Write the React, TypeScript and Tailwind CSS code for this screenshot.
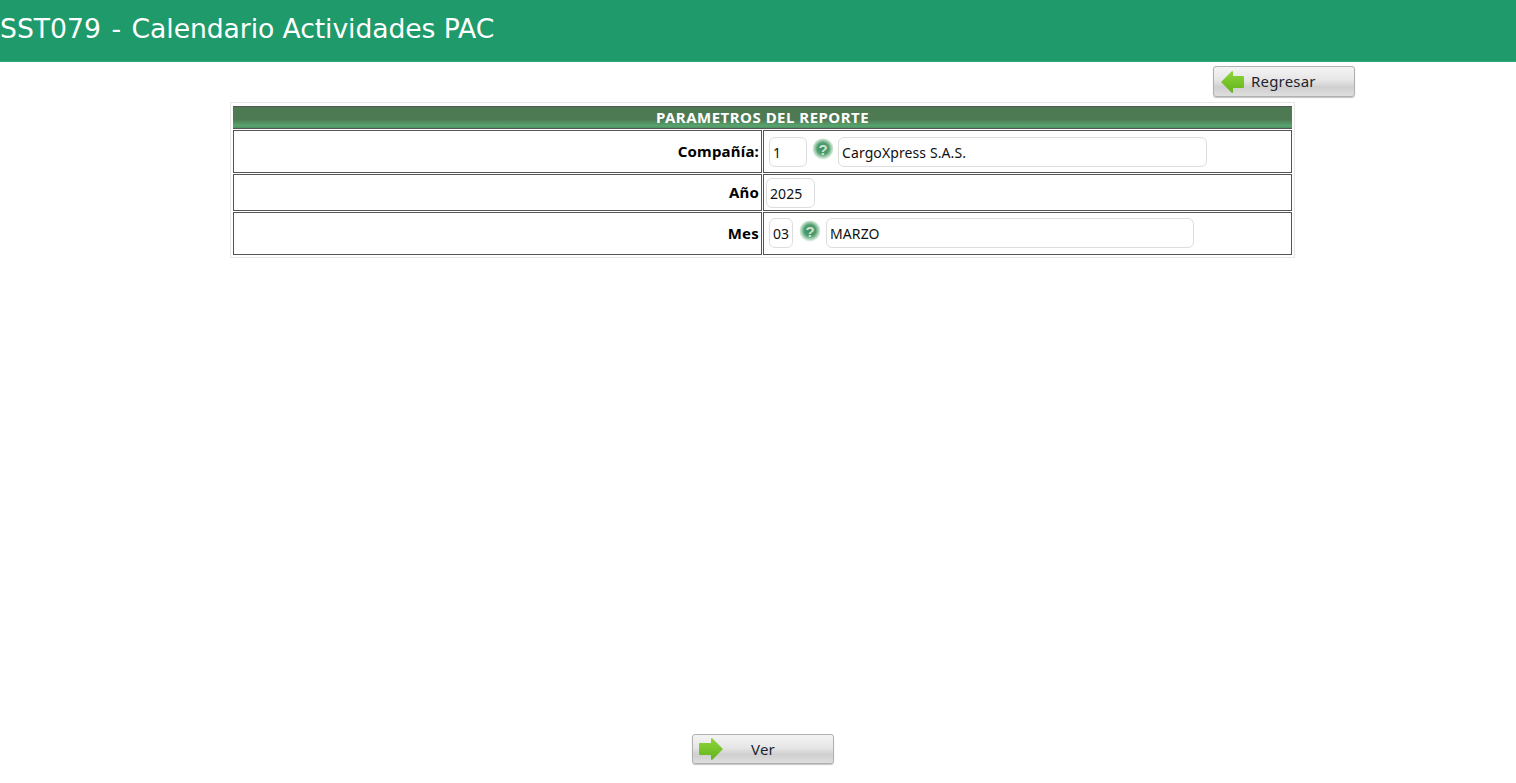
import type { ReactNode } from 'react';

const uiFont = 'font-["Noto_Sans",sans-serif]';

function Arrow({ left }: { left?: boolean }) {
  return (
    <svg width="26" height="24" viewBox="0 0 26 24" className="shrink-0">
      <defs>
        <linearGradient id={left ? 'ga' : 'gb'} x1="0" y1="0" x2="0" y2="1">
          <stop offset="0" stopColor="#8ed63a" />
          <stop offset="1" stopColor="#62b31c" />
        </linearGradient>
      </defs>
      <path
        d={left ? 'M1 12 L12 1 L13 1.5 L13 6 L23 6 Q24 6 24 7 L24 17 Q24 18 23 18 L13 18 L13 22.5 L12 23 Z' : 'M24 12 L13 1 L12 1.5 L12 6 L1 6 Q0 6 0 7 L0 17 Q0 18 1 18 L12 18 L12 22.5 L13 23 Z'}
        fill={`url(#${left ? 'ga' : 'gb'})`}
      />
    </svg>
  );
}

function HelpIcon() {
  return (
    <svg width="22" height="22" viewBox="0 0 22 22" className="shrink-0">
      <defs>
        <radialGradient id="help" cx="0.5" cy="0.48" r="0.5">
          <stop offset="0" stopColor="#3c8f5c" />
          <stop offset="0.55" stopColor="#4f9d6e" />
          <stop offset="0.8" stopColor="#a5d0b3" />
          <stop offset="1" stopColor="#e3f1e7" />
        </radialGradient>
      </defs>
      <circle cx="11" cy="11" r="10.5" fill="url(#help)" />
      <text x="11" y="16.5" textAnchor="middle" fontSize="15" fontWeight="700" fill="#cfe3d5" fontFamily="Liberation Sans, sans-serif">?</text>
    </svg>
  );
}

function Button({ children, className, icon }: { children: ReactNode; className: string; icon: ReactNode }) {
  return (
    <div className={`flex w-[142px] items-center rounded-[3px] border border-[#b0b0b0] bg-[linear-gradient(#f4f4f4_0%,#e6e6e6_45%,#cfcfcf_70%,#dedede_100%)] pl-[6px] text-[15px] tracking-[0.2px] text-[#1c2430] shadow-[0_1px_1px_#c4c4c4] ${uiFont} ${className}`}>
      {icon}
      {children}
    </div>
  );
}

function Field({ value, width }: { value: string; width: string }) {
  return (
    <div className={`flex h-[30px] items-center rounded-[6px] border border-[#dddddd] bg-white pt-0.5 pl-[3px] text-[14px] tracking-[0.1px] text-[#111] ${width}`}>
      {value}
    </div>
  );
}

function Row({ label, height, children }: { label: string; height: string; children: ReactNode }) {
  return (
    <div className={`flex gap-px ${height}`}>
      <div className="flex w-[529px] items-center justify-end border border-[#555555] pr-0.5 text-[15px] font-bold tracking-[0.2px] text-black">
        {label}
      </div>
      <div className="flex w-[529px] items-center border border-[#555555]">{children}</div>
    </div>
  );
}

export default function App() {
  return (
    <div className={`relative h-[783px] overflow-hidden bg-white ${uiFont}`}>
      <header className='flex h-[62px] items-center border-b border-[#2fa877] bg-[#1e9a6b] pb-1 font-["DejaVu_Sans",sans-serif] text-[26.67px] whitespace-pre text-white'>
        <h1>
          SST079 <span className="mx-0.5">-</span> <span className="tracking-[-0.1px]">Calendario Actividades PAC</span>
        </h1>
      </header>

      <div className="mt-1 flex pl-[1213px]">
        <Button className="h-[31px] gap-[5px]" icon={<Arrow left />}>Regresar</Button>
      </div>

      <section className="mt-[5px] ml-[230px] flex w-[1065px] flex-col gap-px border border-[#e6e6e6] px-0.5 pt-[3px] pb-0.5">
        <div className="flex h-[23px] items-center justify-center border-y border-[#555555] bg-[linear-gradient(#4e7a53_0%,#4e7a53_60%,#58a56f_90%,#4f8f60_100%)] text-[15px] font-bold tracking-[0.5px] text-white">
          PARAMETROS DEL REPORTE
        </div>
        <Row label="Compañía:" height="h-[43px]">
          <div className="ml-[5px] flex items-center gap-[5px]">
            <Field value="1" width="w-[38px]" />
            <span className="-mr-px -mt-[5px]"><HelpIcon /></span>
            <Field value="CargoXpress S.A.S." width="w-[369px]" />
          </div>
        </Row>
        <Row label="Año" height="h-[37px]">
          <div className="ml-0.5">
            <Field value="2025" width="w-[49px]" />
          </div>
        </Row>
        <Row label="Mes" height="h-[43px]">
          <div className="ml-[5px] flex items-center gap-[5px] pb-0.5">
            <Field value="03" width="w-6" />
            <span className="ml-px -mt-1"><HelpIcon /></span>
            <Field value="MARZO" width="w-[368px]" />
          </div>
        </Row>
      </section>

      <div className="mt-[476px] flex pl-[692px]">
        <Button className="h-[30px]" icon={<Arrow />}>
          <span className="ml-[26px]">Ver</span>
        </Button>
      </div>
    </div>
  );
}
